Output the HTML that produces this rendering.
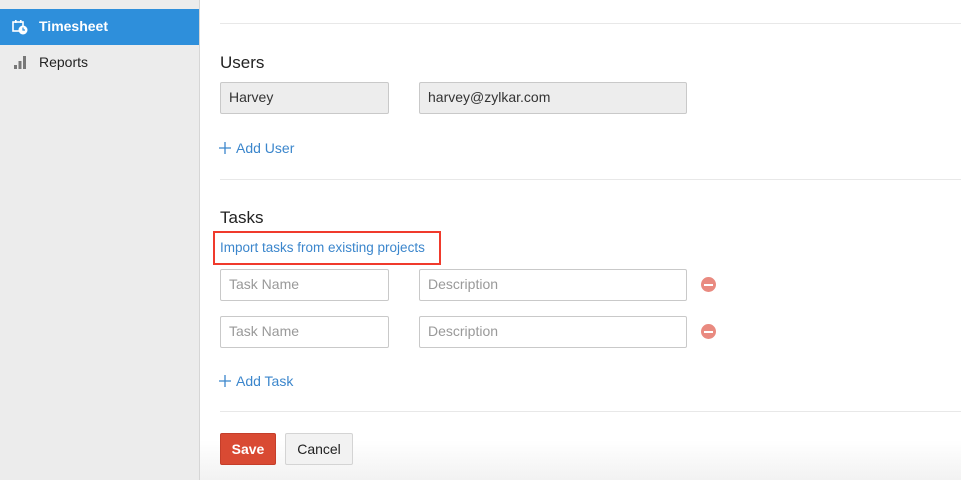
<!DOCTYPE html>
<html><head><style>
body{margin:0;width:961px;height:480px;overflow:hidden;background:#fff;font-family:"Liberation Sans",sans-serif;position:relative}
.a{position:absolute}
.side{left:0;top:0;width:199px;height:480px;background:#ececec;border-right:1px solid #d6d6d6}
.inp{position:absolute;box-sizing:border-box;border:1px solid #c9c9c9;border-radius:2px;font-size:14px;color:#999;padding-left:8px;line-height:29px}
.gray{background:#ededed;color:#333}
.hr{position:absolute;left:220px;right:0;height:1px;background:#e8e8e8}
.link{color:#3b86cc;font-size:14px}
.minus{position:absolute;width:15px;height:15px;border-radius:50%;background:#e98a80}
.minus:after{content:"";position:absolute;left:3px;top:6.5px;width:9px;height:2px;background:#fff}
</style></head><body>
<div class="a side"></div>
<div class="a" style="left:0;top:9px;width:199px;height:36px;background:#2e8fdb"></div>
<svg class="a" style="left:12px;top:19px" width="16" height="16" viewBox="0 0 16 16"><rect x="1" y="3" width="10" height="9" fill="none" stroke="#fff" stroke-width="1.6"/><rect x="3" y="1" width="1.6" height="3" fill="#fff"/><rect x="8" y="1" width="1.6" height="3" fill="#fff"/><circle cx="11" cy="11" r="4.5" fill="#fff"/><path d="M11 8.5v2.5h2" stroke="#2e8fdb" stroke-width="1.2" fill="none"/></svg>
<div class="a" style="left:39px;top:18px;color:#fff;font-weight:bold;font-size:14px">Timesheet</div>
<svg class="a" style="left:13px;top:55px" width="14" height="15"><rect x="1" y="10" width="3" height="4" fill="#777"/><rect x="5.5" y="6" width="3" height="8" fill="#777"/><rect x="10" y="1" width="3" height="13" fill="#777"/></svg>
<div class="a" style="left:39px;top:54px;color:#222;font-size:14px">Reports</div>

<div class="hr" style="top:23px"></div>
<div class="a" style="left:220px;top:53px;font-size:17px;color:#222">Users</div>
<div class="inp gray" style="left:220px;top:82px;width:169px;height:32px">Harvey</div>
<div class="inp gray" style="left:419px;top:82px;width:268px;height:32px">harvey@zylkar.com</div>
<svg class="a" style="left:219px;top:142px" width="12" height="12"><path d="M6 0v12M0 6h12" stroke="#3b86cc" stroke-width="1.3"/></svg>
<div class="a link" style="left:236px;top:140px">Add User</div>
<div class="hr" style="top:179px"></div>
<div class="a" style="left:220px;top:208px;font-size:17px;color:#222">Tasks</div>
<div class="a" style="left:213px;top:231px;width:224px;height:30px;border:2px solid #f03a2c"></div>
<div class="a link" style="left:220px;top:240px;font-size:13.5px">Import tasks from existing projects</div>
<div class="inp" style="left:220px;top:269px;width:169px;height:32px">Task Name</div>
<div class="inp" style="left:419px;top:269px;width:268px;height:32px">Description</div>
<div class="minus" style="left:701px;top:277px"></div>
<div class="inp" style="left:220px;top:316px;width:169px;height:32px">Task Name</div>
<div class="inp" style="left:419px;top:316px;width:268px;height:32px">Description</div>
<div class="minus" style="left:701px;top:324px"></div>
<svg class="a" style="left:219px;top:375px" width="12" height="12"><path d="M6 0v12M0 6h12" stroke="#3b86cc" stroke-width="1.3"/></svg>
<div class="a link" style="left:236px;top:373px">Add Task</div>
<div class="hr" style="top:411px"></div>
<div class="a" style="left:200px;top:440px;width:761px;height:40px;background:linear-gradient(#fff,#f2f2f2)"></div>
<div class="a" style="left:220px;top:433px;width:56px;height:32px;box-sizing:border-box;background:#d94a33;border:1px solid #c43e2a;border-radius:2px;color:#fff;font-weight:bold;font-size:14px;text-align:center;line-height:30px">Save</div>
<div class="a" style="left:285px;top:433px;width:68px;height:32px;box-sizing:border-box;background:#f2f2f2;border:1px solid #d4d4d4;border-radius:2px;color:#222;font-size:14px;text-align:center;line-height:30px">Cancel</div>
</body></html>
